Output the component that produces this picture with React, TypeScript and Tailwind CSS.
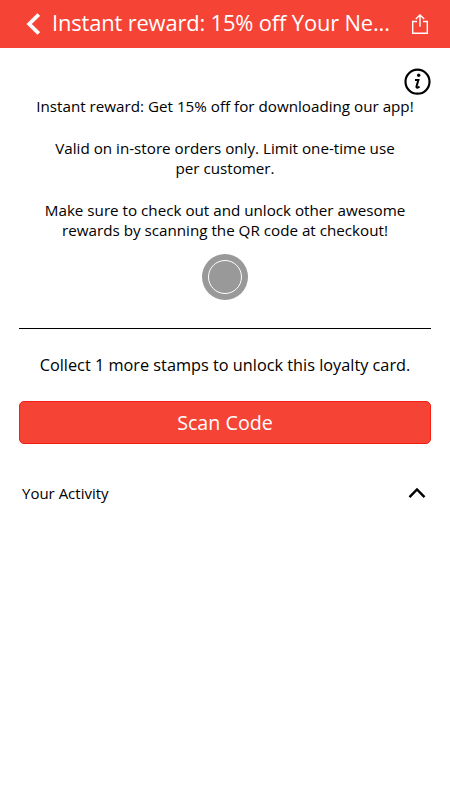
const paragraphs = [
  ["Instant reward: Get 15% off for downloading our app!"],
  ["Valid on in-store orders only. Limit one-time use", "per customer."],
  ["Make sure to check out and unlock other awesome", "rewards by scanning the QR code at checkout!"],
];

function Header() {
  return (
    <header className="flex h-12 items-center bg-[#f54336] text-white">
      <svg className="ml-[26px] h-[22px] w-[14px] shrink-0" viewBox="0 0 14 22" fill="none" stroke="currentColor" strokeWidth="3.8">
        <path d="M12.7 1.500 3.200 11l9.500 9.500" />
      </svg>
      <h1 className="-mt-[3px] ml-3 w-[340px] shrink-0 whitespace-nowrap text-[21.900px] leading-[30px] tracking-[-0.150px]">
        Instant reward: 15% off Your Ne...
      </h1>
      <svg className="ml-[19px] h-[22px] w-[18px] shrink-0" viewBox="0 0 18 22" fill="none" stroke="currentColor" strokeWidth="1.400">
        <path d="M6 8.500H1.700v11.800h14.600V8.500H12M9 13.800V2M4.800 6 9 2l4.200 4" />
      </svg>
    </header>
  );
}

export default function App() {
  return (
    <div className="min-h-screen bg-white font-['Open_Sans',sans-serif] text-black">
      <Header />
      <main className="px-[19px]">
        <div className="flex h-[48px] justify-end pt-5">
          <svg className="h-7 w-7" viewBox="0 0 28 28" fill="none" stroke="black" strokeWidth="2.200">
            <circle cx="14.500" cy="13.700" r="12" />
            <path d="M12 11.900h3.400l-1.900 6.500c-.3 1.900 1.500 1.600 3 .2" strokeWidth="2" />
            <circle cx="15.700" cy="7.300" r="1.700" fill="black" stroke="none" />
          </svg>
        </div>
        <div className="flex flex-col gap-[21px] text-center text-[15.200px] leading-[20.500px]">
          {paragraphs.map((lines) => (
            <p key={lines[0]}>
              {lines.map((line) => (
                <span key={line} className="block whitespace-nowrap">{line}</span>
              ))}
            </p>
          ))}
        </div>
        <div className="mx-auto mt-[13px] flex size-[46px] items-center justify-center rounded-full bg-[#999]">
          <div className="size-[34px] rounded-full border-[1.500px] border-white" />
        </div>
        <hr className="mt-7 border-black" />
        <p className="mt-6 whitespace-nowrap text-center text-[16.300px] leading-6">
          Collect 1 more stamps to unlock this loyalty card.
        </p>
        <button className="mt-6 h-[43px] w-full rounded-[5px] border border-[#f41e12] bg-[#f54336] pt-0.5 text-[19.700px] text-white">
          Scan Code
        </button>
        <div className="mt-[38px] flex items-center justify-between pr-[5px] pl-[3px] text-[15px]">
          <h2>Your Activity</h2>
          <svg className="h-3 w-[18px]" viewBox="0 0 18 12" fill="none" stroke="black" strokeWidth="2.400">
            <path d="m1.500 10.200 7.500-7.700 7.500 7.700" />
          </svg>
        </div>
      </main>
    </div>
  );
}
